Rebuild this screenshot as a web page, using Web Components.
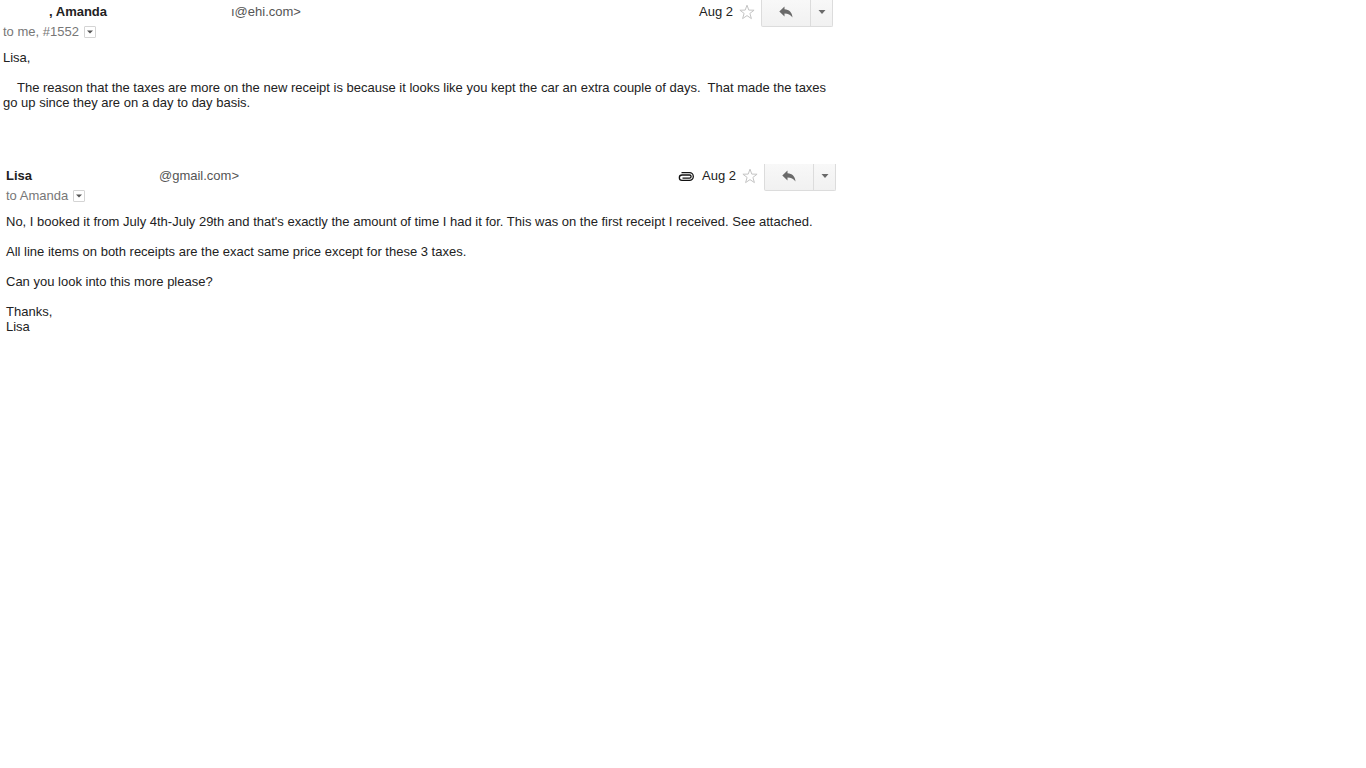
<!DOCTYPE html>
<html lang="en">
<head>
<meta charset="utf-8">
<meta name="viewport" content="width=device-width, initial-scale=1">
<title>Conversation</title>
<style>
  body {
    margin: 0;
    background: #fff;
    color: #222;
    font: 13px/15px "Liberation Sans", Arial, sans-serif;
  }

  p {
    margin: 0 0 15px;
  }

  .indent {
    padding-left: 14px;
  }

  .amanda {
    --name-indent: 46px;
    --name-width: 228px;
  }

  .lisa {
    --name-width: 153px;
    margin-left: 3px;
  }
</style>
</head>
<body>
<mail-thread>
  <mail-message class="amanda">
    <span slot="name">, Amanda</span>
    <span slot="email">ı@ehi.com&gt;</span>
    <span slot="to">to me, #1552</span>
    <span slot="date">Aug 2</span>
    <p>Lisa,</p>
    <p><span class="indent"></span>The reason that the taxes are more on the new receipt is because it looks like you kept the car an extra couple of days.&nbsp; That made the taxes go up since they are on a day to day basis.</p>
  </mail-message>
  <mail-message class="lisa" attachment>
    <span slot="name">Lisa</span>
    <span slot="email">@gmail.com&gt;</span>
    <span slot="to">to Amanda</span>
    <span slot="date">Aug 2</span>
    <p>No, I booked it from July 4th-July 29th and that's exactly the amount of time I had it for. This was on the first receipt I received. See attached.</p>
    <p>All line items on both receipts are the exact same price except for these 3 taxes.</p>
    <p>Can you look into this more please?</p>
    <p>Thanks,<br>Lisa</p>
  </mail-message>
</mail-thread>

<script>
class MailThread extends HTMLElement {
  constructor() {
    super();
    this.attachShadow({mode: 'open'});
    this.shadowRoot.innerHTML = `
      <style>
        :host {
          display: flex;
          flex-direction: column;
          gap: 39px;
          padding-left: 3px;
        }
      </style>
      <slot></slot>
    `;
  }
}

class DetailsToggle extends HTMLElement {
  constructor() {
    super();
    this.attachShadow({mode: 'open'});
    this.shadowRoot.innerHTML = `
      <style>
        :host {
          display: flex;
        }

        button {
          display: flex;
          align-items: center;
          justify-content: center;
          width: 12px;
          height: 12px;
          padding: 0;
          border: 1px solid #d4d4d4;
          border-radius: 1px;
          background: #fff;
        }
      </style>
      <button type="button" aria-label="Show details">
        <svg width="6" height="4" viewBox="0 0 6 4"><path d="M0 .5h6L3 3.500z" fill="#555"/></svg>
      </button>
    `;
  }
}

class StarButton extends HTMLElement {
  constructor() {
    super();
    this.attachShadow({mode: 'open'});
    this.shadowRoot.innerHTML = `
      <style>
        :host {
          display: flex;
        }

        button {
          display: flex;
          padding: 0;
          border: none;
          background: none;
        }
      </style>
      <button type="button" aria-label="Star">
        <svg width="16" height="16" viewBox="0 0 16 16" fill="#fff" stroke="#c4c4c4">
          <path d="M8 1.200l1.800 4.900 5.300.1-4.200 3.200 1.500 5.200L8 11.600l-4.400 3 1.500-5.200L.9 6.200l5.300-.1z"/>
        </svg>
      </button>
    `;
  }
}

class ReplyButtons extends HTMLElement {
  constructor() {
    super();
    this.attachShadow({mode: 'open'});
    this.shadowRoot.innerHTML = `
      <style>
        :host {
          display: flex;
          box-sizing: border-box;
          height: 27px;
          border: 1px solid #dcdcdc;
          border-top: none;
          border-radius: 0 0 2px 2px;
          background: linear-gradient(#f8f8f8, #f1f1f1);
        }

        button {
          display: flex;
          align-items: center;
          justify-content: center;
          width: 48px;
          padding: 0 0 2px;
          border: none;
          background: none;
        }

        .more {
          width: 22px;
          border-left: 1px solid #dcdcdc;
        }
      </style>
      <button type="button" aria-label="Reply">
        <svg width="14" height="12" viewBox="0 0 14 12">
          <path d="M5.500.500v2.700c4.600.2 7.700 3 8 8.300-2-2.700-4.400-3.900-8-3.900v2.900L.3 5.400z" fill="#6a6a6a"/>
        </svg>
      </button>
      <button type="button" class="more" aria-label="More">
        <svg width="8" height="4" viewBox="0 0 8 4"><path d="M.5 0h7L4 4z" fill="#6a6a6a"/></svg>
      </button>
    `;
  }
}

class MailMessage extends HTMLElement {
  constructor() {
    super();
    this.attachShadow({mode: 'open'});
    this.shadowRoot.innerHTML = `
      <style>
        :host {
          display: block;
          max-width: 830px;
        }

        header {
          display: flex;
          align-items: flex-start;
          justify-content: space-between;
          margin-bottom: 8px;
          line-height: 20px;
        }

        .from {
          padding-top: 2px;
        }

        .line,
        .tools {
          display: flex;
          align-items: center;
        }

        .name {
          box-sizing: border-box;
          min-width: var(--name-width);
          padding-left: var(--name-indent, 0);
          font-weight: bold;
        }

        .email {
          color: #555;
        }

        .to {
          gap: 5px;
          color: #777;
        }

        .clip {
          display: none;
          margin-right: 8px;
        }

        :host([attachment]) .clip {
          display: block;
        }

        .tools {
          height: 27px;
        }

        .date,
        star-button {
          padding-bottom: 3px;
        }

        .clip {
          padding-bottom: 2px;
        }

        star-button {
          margin: 0 6px;
        }
      </style>
      <header>
        <div class="from">
          <div class="line">
            <span class="name"><slot name="name"></slot></span>
            <span class="email"><slot name="email"></slot></span>
          </div>
          <div class="line to">
            <slot name="to"></slot>
            <details-toggle></details-toggle>
          </div>
        </div>
        <div class="tools">
          <svg class="clip" role="img" aria-label="Attachment" width="16" height="9" viewBox="0 0 16 9" fill="none" stroke="#111" stroke-width="1.300">
            <path d="M4.500 6.200h7a1.500 1.500 0 0 0 0-3.200H4a2.600 2.600 0 0 0 0 5.300h7.500a3.800 3.800 0 0 0 0-7.600H3.500"/>
          </svg>
          <span class="date"><slot name="date"></slot></span>
          <star-button></star-button>
          <reply-buttons></reply-buttons>
        </div>
      </header>
      <slot></slot>
    `;
  }
}

customElements.define('mail-thread', MailThread);
customElements.define('details-toggle', DetailsToggle);
customElements.define('star-button', StarButton);
customElements.define('reply-buttons', ReplyButtons);
customElements.define('mail-message', MailMessage);
</script>
</body>
</html>
